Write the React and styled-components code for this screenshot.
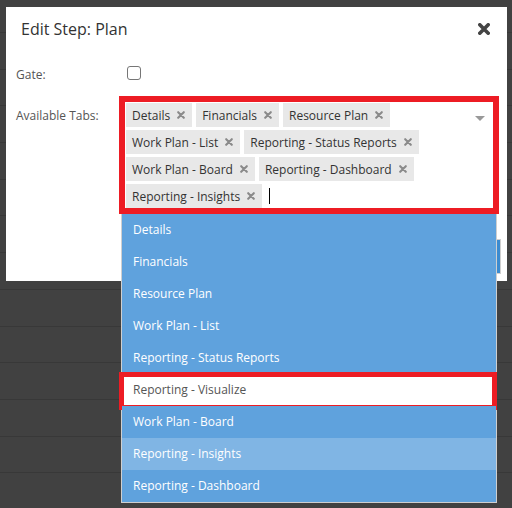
import React from 'react'
import styled, { createGlobalStyle } from 'styled-components'

const selected = [
  'Details',
  'Financials',
  'Resource Plan',
  'Work Plan - List',
  'Reporting - Status Reports',
  'Work Plan - Board',
  'Reporting - Dashboard',
  'Reporting - Insights',
]

const options = [
  { label: 'Details' },
  { label: 'Financials' },
  { label: 'Resource Plan' },
  { label: 'Work Plan - List' },
  { label: 'Reporting - Status Reports' },
  { label: 'Reporting - Visualize', marked: true },
  { label: 'Work Plan - Board' },
  { label: 'Reporting - Insights', hover: true },
  { label: 'Reporting - Dashboard' },
]

const GlobalStyle = createGlobalStyle`
  html, body {
    margin: 0;
    padding: 0;
    background: #414141;
    font-family: "Open Sans", "Noto Sans", Arial, sans-serif;
  }
  * { box-sizing: border-box; }
`

function XIcon({ size = 8, color = '#8a8a8a', weight = 2.6 }) {
  return (
    <svg width={size} height={size} viewBox="0 0 10 10">
      <path d="M1.5 1.5 L8.5 8.5 M8.5 1.5 L1.5 8.5" stroke={color} strokeWidth={weight} strokeLinecap="round" />
    </svg>
  )
}

function App() {
  return (
    <Page>
      <GlobalStyle />
      <BgTable>
        <BgHead />
        {Array.from({ length: 13 }).map((_, i) => <BgRow key={i} />)}
      </BgTable>

      <Modal>
        <Header>
          <Title>Edit Step: Plan</Title>
          <CloseBtn><XIcon size={12} color="#444" weight={3} /></CloseBtn>
        </Header>
        <Body>
          <Label>Gate:</Label>
          <Field><Check /></Field>
          <Label top>Available Tabs:</Label>
          <Field>
            <SelectWrap>
              <Select>
                {selected.map(t => (
                  <Tag key={t}>
                    {t}
                    <XIcon />
                  </Tag>
                ))}
                <Caret />
                <Arrow />
              </Select>
              <Menu>
                {options.map(o => (
                  <Item key={o.label} $hover={o.hover} $marked={o.marked}>
                    {o.label}
                    {o.marked && <Mark />}
                  </Item>
                ))}
              </Menu>
            </SelectWrap>
          </Field>
        </Body>
        <Footer>
          <SaveBtn>Save</SaveBtn>
        </Footer>
      </Modal>
    </Page>
  )
}

const Page = styled.div`
  position: relative;
  width: 512px;
  height: 508px;
  overflow: hidden;
  background: #414141;
`

const BgTable = styled.div`
  display: flex;
  flex-direction: column;
`

const BgHead = styled.div`
  height: 33px;
  border-bottom: 1px solid #383838;
`

const BgRow = styled.div`
  height: 36.7px;
  border-bottom: 1px solid #383838;
`

const Modal = styled.div`
  position: absolute;
  top: 7px;
  left: 6px;
  width: 501px;
  height: 274px;
  background: #fff;
  display: flex;
  flex-direction: column;
`

const Header = styled.div`
  display: flex;
  align-items: center;
  justify-content: space-between;
  padding: 0 15px;
  height: 43px;
`

const Title = styled.h4`
  margin: 0;
  font-size: 16px;
  font-weight: 400;
  color: #333;
`

const CloseBtn = styled.span`
  display: flex;
  margin-right: 2px;
`

const Body = styled.div`
  display: grid;
  grid-template-columns: 110px 1fr;
  row-gap: 14px;
  padding: 16px 8px 0 10px;
  align-items: start;
`

const Label = styled.div`
  font-size: 12px;
  color: #555;
  line-height: 16px;
  padding-top: ${p => (p.top ? '11px' : '1px')};
`

const Field = styled.div`
  display: flex;
  align-items: center;
`

const Check = styled.span`
  width: 14px;
  height: 14px;
  border: 1.5px solid #767676;
  border-radius: 3px;
  margin-left: 1px;
`

const SelectWrap = styled.div`
  position: relative;
  width: 380px;
  margin-left: -7px;
  margin-top: -1px;
  z-index: 2;
`

const Select = styled.div`
  position: relative;
  display: flex;
  flex-wrap: wrap;
  gap: 3px 4px;
  align-items: center;
  border: 6px solid #ed1c24;
  padding: 1px 28px 0 1px;
  min-height: 118px;
  background: #fff;
`

const Tag = styled.span`
  display: inline-flex;
  align-items: center;
  gap: 7px;
  height: 24px;
  padding: 0 7px 0 6px;
  background: #e8e8e8;
  color: #333;
  font-size: 12px;
`

const Caret = styled.span`
  width: 1px;
  height: 16px;
  background: #000;
  margin-left: 3px;
`

const Arrow = styled.span`
  position: absolute;
  right: 8px;
  top: 14px;
  width: 0;
  height: 0;
  border-left: 5px solid transparent;
  border-right: 5px solid transparent;
  border-top: 5px solid #999;
`

const Menu = styled.div`
  position: absolute;
  top: 118px;
  left: 2px;
  width: 376px;
  border: 1px solid #cfcfcf;
  border-top: none;
  background: #5fa2dd;
`

const Item = styled.div`
  position: relative;
  height: 32px;
  line-height: 32px;
  padding-left: 11px;
  font-size: 12px;
  color: ${p => (p.$marked ? '#555' : '#fff')};
  background: ${p => (p.$marked ? '#fff' : p.$hover ? '#80b5e4' : '#5fa2dd')};
`

const Mark = styled.span`
  position: absolute;
  top: -2px;
  left: -3px;
  right: -1px;
  bottom: -4px;
  border: 5px solid #ed1c24;
`

const Footer = styled.div`
  margin-top: auto;
  display: flex;
  justify-content: flex-end;
  padding: 0 6px 7px 0;
`

const SaveBtn = styled.button`
  height: 35px;
  width: 70px;
  background: #3b8bd0;
  border: 1px solid #d0d0d0;
  color: #fff;
  font-family: inherit;
  font-size: 13px;
`

export default App
